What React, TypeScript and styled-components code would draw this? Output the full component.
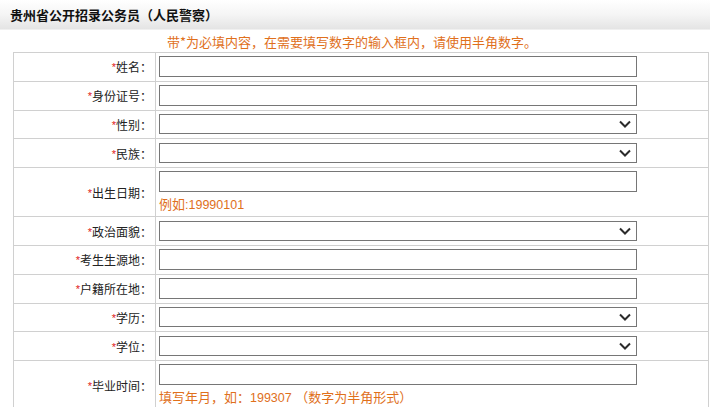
import styled, { createGlobalStyle } from "styled-components";

const GlobalStyle = createGlobalStyle`
  html, body {
    margin: 0;
    padding: 0;
    background: #ffffff;
  }
  body {
    font-family: "Noto Sans CJK SC", "Liberation Sans", sans-serif;
    font-size: 12px;
    color: #222;
  }
`;

const Page = styled.div`
  width: 710px;
  height: 407px;
  overflow: hidden;
`;

const Header = styled.div`
  height: 30px;
  display: flex;
  align-items: center;
  padding-left: 10px;
  background: linear-gradient(to bottom, #ffffff 0%, #f5f5f5 50%, #e4e4e4 100%);
  border-bottom: 1px solid #f0f0f0;
  box-sizing: border-box;
`;

const Title = styled.h3`
  margin: 0;
  font-size: 13px;
  font-weight: bold;
  color: #111;
`;

const Notice = styled.div`
  height: 22px;
  display: flex;
  align-items: center;
  justify-content: center;
  padding-right: 6px;
  font-size: 13px;
  color: #e0701c;
`;

const Table = styled.table`
  margin-left: 13px;
  width: 696px;
  border-collapse: collapse;
  border: 1px solid #d0d0d0;
  border-bottom: none;
`;

const Row = styled.tr<{ $tall?: boolean }>`
  height: ${(p) => (p.$tall ? "49px" : "28.8px")};
  border-top: 1px solid #d0d0d0;
`;

const LabelCell = styled.td`
  width: 138px;
  padding: 0 3px 0 0;
  text-align: right;
  vertical-align: middle;
  border-right: 1px solid #d0d0d0;
  font-size: 12px;
  color: #222;
  white-space: nowrap;
`;

const Star = styled.span`
  color: #e02020;
  font-family: "Liberation Sans", sans-serif;
  font-size: 11px;
  vertical-align: 1px;
`;

const FieldCell = styled.td<{ $top?: boolean }>`
  padding: ${(p) => (p.$top ? "3px 0 0 3px" : "0 0 0 3px")};
  vertical-align: ${(p) => (p.$top ? "top" : "middle")};
`;

const TextInput = styled.input`
  display: block;
  box-sizing: border-box;
  width: 478px;
  height: 21px;
  margin: 0;
  padding: 0 3px;
  border: 1px solid #767676;
  background: #fff;
  font: inherit;
`;

const SelectWrap = styled.div`
  position: relative;
  width: 478px;
  height: 20px;
`;

const Select = styled.select`
  display: block;
  box-sizing: border-box;
  width: 478px;
  height: 20px;
  margin: 0;
  padding: 0 3px;
  border: 1px solid #767676;
  background: #fff;
  appearance: none;
  -webkit-appearance: none;
  font: inherit;
  border-radius: 0;
`;

const Chevron = styled.svg`
  position: absolute;
  right: 6px;
  top: 6px;
  pointer-events: none;
`;

const Hint = styled.div`
  margin-top: 4px;
  font-size: 13px;
  line-height: 15px;
  color: #e0701c;
`;

const HintNum = styled.span`
  font-family: "Liberation Sans", sans-serif;
  font-size: 12.5px;
`;

type Field =
  | { label: string; kind: "text" }
  | { label: string; kind: "select" }
  | { label: string; kind: "hint"; hint: React.ReactNode };

const fields: Field[] = [
  { label: "姓名：", kind: "text" },
  { label: "身份证号：", kind: "text" },
  { label: "性别：", kind: "select" },
  { label: "民族：", kind: "select" },
  {
    label: "出生日期：",
    kind: "hint",
    hint: (
      <>
        例如<HintNum>:19990101</HintNum>
      </>
    ),
  },
  { label: "政治面貌：", kind: "select" },
  { label: "考生生源地：", kind: "text" },
  { label: "户籍所在地：", kind: "text" },
  { label: "学历：", kind: "select" },
  { label: "学位：", kind: "select" },
  {
    label: "毕业时间：",
    kind: "hint",
    hint: (
      <>
        填写年月，如：<HintNum>199307 </HintNum>（数字为半角形式）
      </>
    ),
  },
];

const DropDown = () => (
  <SelectWrap>
    <Select defaultValue="">
      <option value=""></option>
    </Select>
    <Chevron width="12" height="8" viewBox="0 0 12 8">
      <path d="M1 1.5 L6 6.5 L11 1.5" fill="none" stroke="#2b2b2b" strokeWidth="2" />
    </Chevron>
  </SelectWrap>
);

const App = () => {
  return (
    <Page>
      <GlobalStyle />
      <Header>
        <Title>贵州省公开招录公务员（人民警察）</Title>
      </Header>
      <Notice>带*为必填内容，在需要填写数字的输入框内，请使用半角数字。</Notice>
      <Table>
        <tbody>
          {fields.map((f) => (
            <Row key={f.label} $tall={f.kind === "hint"}>
              <LabelCell>
                <Star>*</Star>
                {f.label}
              </LabelCell>
              <FieldCell $top={f.kind === "hint"}>
                {f.kind === "select" ? <DropDown /> : <TextInput type="text" />}
                {f.kind === "hint" && <Hint>{f.hint}</Hint>}
              </FieldCell>
            </Row>
          ))}
        </tbody>
      </Table>
    </Page>
  );
};

export default App;
